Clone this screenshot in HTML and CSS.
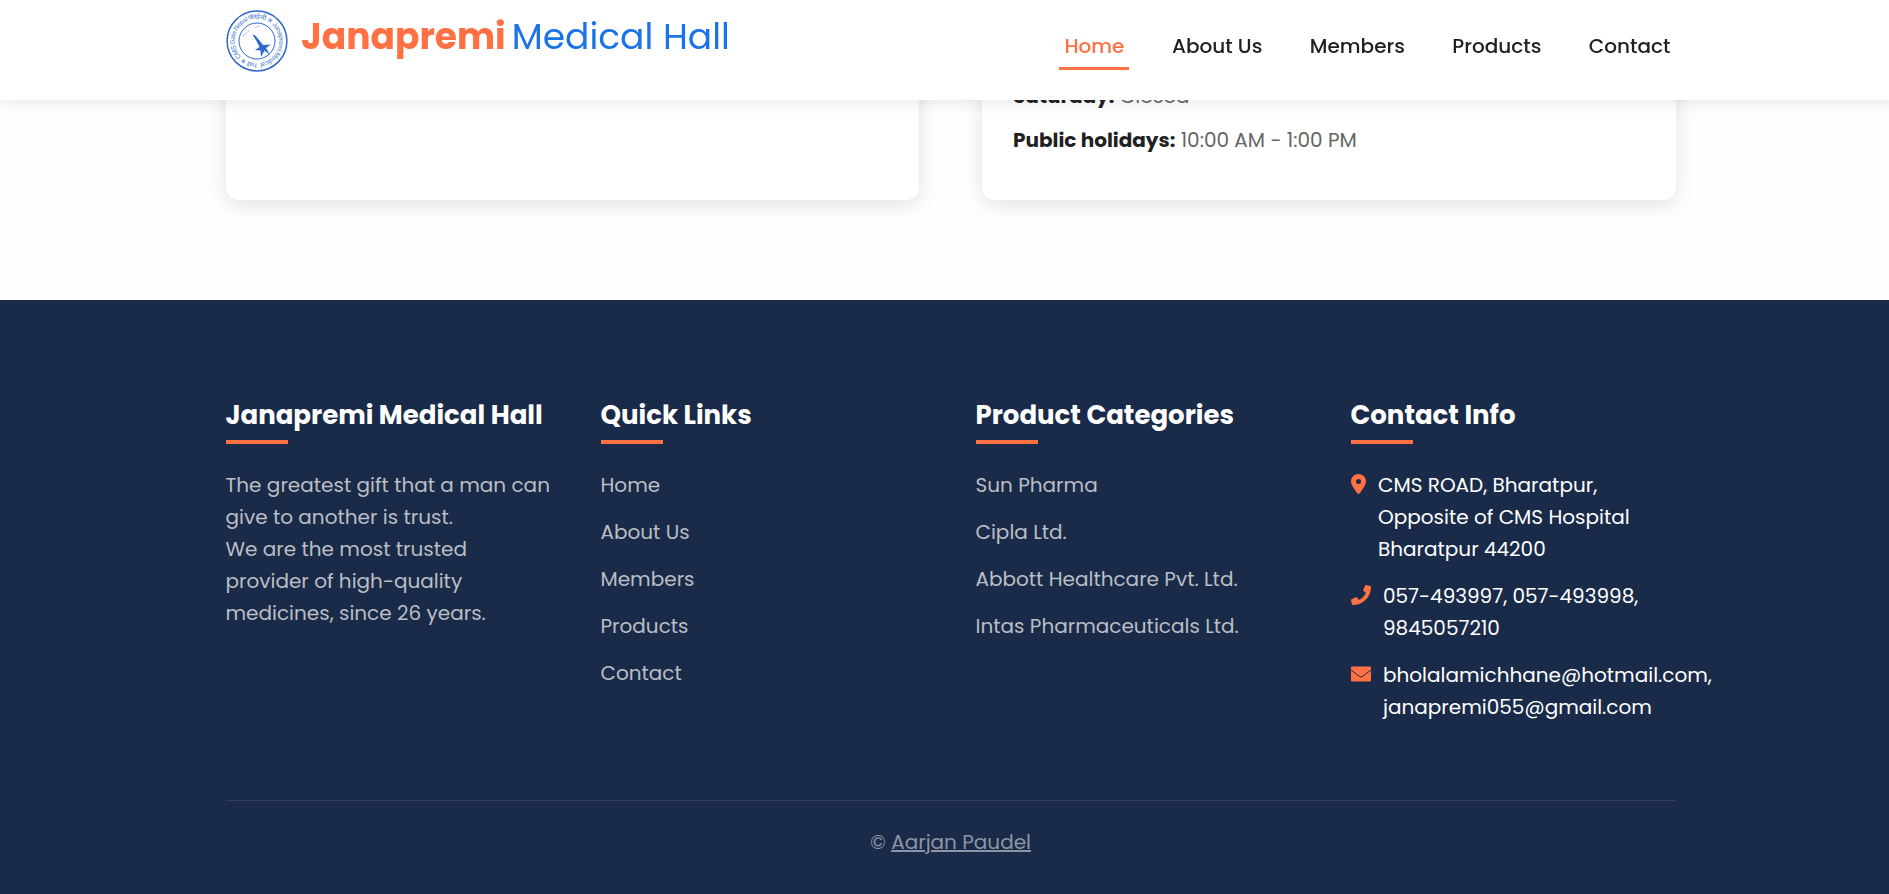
FILE: index.html
```html
<!DOCTYPE html>
<html lang="en">
<head>
<meta charset="utf-8">
<title>Janapremi Medical Hall</title>
<link rel="stylesheet" href="styles.css">
</head>
<body>
<header class="header">
  <a class="brand">
    <svg class="logo" viewBox="0 0 62 62" fill="none" stroke="#2f66cc">
      <defs>
        <path id="ring" d="M31 53.200A22.200 22.200 0 1 1 31.100 53.200"/>
      </defs>
      <circle cx="31" cy="31" r="29.900" stroke-width="1.500"/>
      <circle cx="31" cy="31" r="18" stroke-width="1"/>
      <g fill="#2f66cc" stroke="none">
        <text class="seal"><textPath href="#ring" textLength="136">hall ★ CMS Gate Nepal जनप्रेमी ★ Janapremi Medical</textPath></text>
        <path d="M26.500 24.500l2.500.8 4.500 5.200 3.500 4.500 8-.5-5 3.500 4 7-5.500-4.500-3.500 6.500-.5-6.500-5.500-.5 4.500-3-2.500-5z"/>
      </g>
      <path d="M17 26.500l1.500-2.500M19.500 24.500l1.500-2M22 22l.8-1.500M29.500 18l1.500-2M32 16.500l1.500-.8" stroke-width=".8" opacity=".6"/>
    </svg>
    <span class="title"><b class="title-strong">Janapremi</b><span>Medical Hall</span></span>
  </a>
  <nav class="nav">
    <a class="nav-link active">Home</a>
    <a class="nav-link">About Us</a>
    <a class="nav-link">Members</a>
    <a class="nav-link">Products</a>
    <a class="nav-link">Contact</a>
  </nav>
</header>

<main class="info">
  <section class="card"></section>
  <section class="card">
    <p class="hours"><b class="day">Saturday:</b> Closed</p>
    <p class="hours"><b class="day">Public holidays:</b> 10:00 AM - 1:00 PM</p>
  </section>
</main>

<footer class="footer">
  <div class="columns">
    <section class="col">
      <h3 class="head">Janapremi Medical Hall</h3>
      <p>The greatest gift that a man can<br>give to another is trust.<br>We are the most trusted<br>provider of high-quality<br>medicines, since 26 years.</p>
    </section>
    <section class="col">
      <h3 class="head">Quick Links</h3>
      <ul class="list">
        <li>Home</li>
        <li>About Us</li>
        <li>Members</li>
        <li>Products</li>
        <li>Contact</li>
      </ul>
    </section>
    <section class="col">
      <h3 class="head">Product Categories</h3>
      <ul class="list">
        <li>Sun Pharma</li>
        <li>Cipla Ltd.</li>
        <li>Abbott Healthcare Pvt. Ltd.</li>
        <li>Intas Pharmaceuticals Ltd.</li>
      </ul>
    </section>
    <section class="col">
      <h3 class="head">Contact Info</h3>
      <ul class="list contact">
        <li><svg class="icon pin" viewBox="0 0 384 512"><path d="M215.700 499.200C267 435 384 279.400 384 192 384 86 298 0 192 0S0 86 0 192c0 87.400 117 243 168.300 307.200 12.300 15.300 35.100 15.300 47.400 0zM192 128a64 64 0 1 1 0 128 64 64 0 1 1 0-128z"/></svg>
          <p>CMS ROAD, Bharatpur,<br>Opposite of CMS Hospital<br>Bharatpur 44200</p></li>
        <li><svg class="icon" viewBox="0 0 512 512"><path d="M493.400 24.600l-104-24c-11.300-2.600-22.900 3.300-27.500 13.900l-48 112c-4.200 9.800-1.400 21.300 6.900 28l60.600 49.600c-36 76.700-98.900 140.500-177.200 177.200l-49.600-60.600c-6.800-8.300-18.200-11.100-28-6.900l-112 48C3.900 366.500-2 378.100.6 389.400l24 104C27.100 504.200 36.700 512 48 512c256.100 0 464-207.500 464-464 0-11.200-7.700-20.900-18.600-23.400z"/></svg>
          <p>057-493997, 057-493998,<br>9845057210</p></li>
        <li><svg class="icon mail" viewBox="0 0 20 20"><rect y="2.500" width="20" height="15" rx="1.200"/><path class="flap" d="M0 6l8.800 6.600q1.200.8 2.400 0L20 6"/></svg>
          <p>bholalamichhane@hotmail.com,<br>janapremi055@gmail.com</p></li>
      </ul>
    </section>
  </div>
  <div class="copyright"><p>© <a class="author">Aarjan Paudel</a></p></div>
</footer>
</body>
</html>
```

FILE: styles.css
```css
* { box-sizing: border-box; margin: 0; padding: 0; }

html { overflow: hidden; }

body {
  height: 894px;
  overflow: hidden;
  background: #fefefe;
  font: 400 20px/32px Poppins, Inter, "Open Sans", sans-serif;
}

/* Header */
.header {
  position: fixed;
  top: 0;
  left: 0;
  z-index: 10;
  display: flex;
  justify-content: space-between;
  width: 1902px;
  height: 100px;
  padding: 0 226.500px 0 225.500px;
  background: #fff;
  box-shadow: 0 2px 15px rgba(0, 0, 0, .1);
}
.brand { display: flex; align-items: flex-start; gap: 13.500px; padding-top: 10px; }
.logo { display: block; width: 62px; height: 62px; }
.seal { font: 600 6.500px Inter, "Open Sans", sans-serif; opacity: .65; }
.title { display: flex; gap: 6px; font-size: 36px; line-height: 53px; color: #1a73e8; white-space: nowrap; }
.title-strong { color: #ff7043; font-weight: 700; }

.nav { display: flex; gap: 37.500px; padding-top: 30px; }
.nav-link {
  height: 40px;
  padding: 0 5px;
  border-bottom: 3px solid transparent;
  color: #212121;
  font-weight: 500;
  white-space: nowrap;
}
.nav-link.active { color: #ff7043; border-color: #ff7043; }

/* Opening hours */
.info { display: flex; gap: 63px; padding: 0 0 100px 225.500px; }
.card {
  display: flex;
  flex: 0 0 693.500px;
  flex-direction: column;
  justify-content: flex-end;
  gap: 12px;
  height: 200px;
  padding: 0 31px 44px;
  border-radius: 13px;
  background: #fff;
  box-shadow: 0 5px 20px rgba(0, 0, 0, .11);
}
.hours { color: #666; }
.day { color: #212121; }

/* Footer */
.footer { height: 594px; padding: 100px 0 0 225.500px; background: #1a2b49; }
.columns { display: grid; grid-template-columns: repeat(4, 325px); gap: 50px; height: 400px; }
.col { white-space: nowrap; color: #bbbec4; }
.head { margin-bottom: 25px; color: #fff; font-size: 26px; line-height: 30px; font-weight: 700; }
.head::after { content: ""; display: block; width: 62.500px; height: 4px; margin-top: 10px; background: #ff7043; }
.list { display: grid; gap: 15px; list-style: none; }

.contact { color: #fff; }
.contact li { display: flex; gap: 12.500px; }
.icon { flex: none; width: 20px; height: 20px; margin-top: 5px; fill: #ff7043; }
.icon.pin { width: 15px; }
.flap { fill: none; stroke: #1a2b49; stroke-width: 1; }

.copyright {
  display: flex;
  justify-content: center;
  width: 1450px;
  padding-top: 25px;
  border-top: 1px solid rgba(255, 255, 255, .1);
  color: #8d95a4;
}
.author { text-decoration: underline; }
```
